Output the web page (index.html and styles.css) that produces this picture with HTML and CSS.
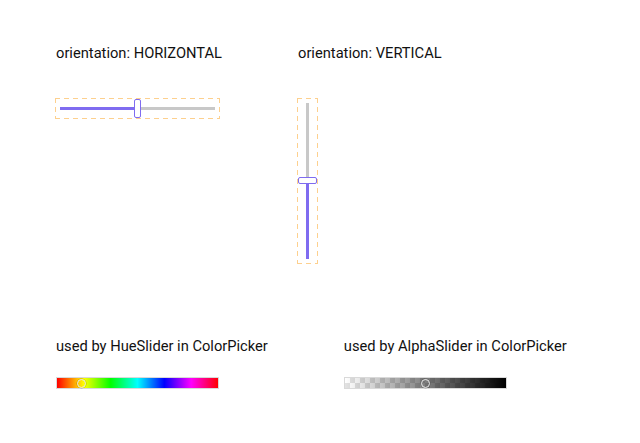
FILE: index.html
```html
<!DOCTYPE html>
<html>
<head>
<meta charset="utf-8">
<link rel="stylesheet" href="styles.css">
</head>
<body>
  <div class="demo">
    <div class="row row-top">
      <div class="item">
        <div class="label">orientation: HORIZONTAL</div>
        <div class="frame frame-h">
          <div class="slider slider-h">
            <div class="track track-h"><div class="fill fill-h"></div></div>
            <div class="thumb thumb-h"></div>
          </div>
        </div>
      </div>
      <div class="item">
        <div class="label">orientation: VERTICAL</div>
        <div class="frame frame-v">
          <div class="slider slider-v">
            <div class="track track-v"><div class="fill fill-v"></div></div>
            <div class="thumb thumb-v"></div>
          </div>
        </div>
      </div>
    </div>

    <div class="row row-bottom">
      <div class="item">
        <div class="label">used by HueSlider in ColorPicker</div>
        <div class="bar hue">
          <div class="knob knob-hue"></div>
        </div>
      </div>
      <div class="item">
        <div class="label">used by AlphaSlider in ColorPicker</div>
        <div class="bar alpha">
          <div class="alpha-grad"></div>
          <div class="knob knob-alpha"></div>
        </div>
      </div>
    </div>
  </div>
</body>
</html>
```

FILE: styles.css
```css
html, body {
  margin: 0;
  padding: 0;
  background: #ffffff;
}

body {
  font-family: Roboto, "Liberation Sans", sans-serif;
  font-size: 14.7px;
  color: #111111;
}

.demo {
  padding: 44px 0 0 56px;
}

.row {
  display: flex;
  column-gap: 76px;
  align-items: flex-start;
}

.row-bottom {
  margin-top: 73px;
}

.label {
  line-height: 18px;
  white-space: nowrap;
}

/* dashed outline around each slider, drawn with long dashes */
.frame {
  --dash: #fdd08e;
  margin-top: 36px;
  box-sizing: border-box;
  background:
    repeating-linear-gradient(to right, var(--dash) 0 5px, transparent 5px 9px) left top / 100% 1px no-repeat,
    repeating-linear-gradient(to right, var(--dash) 0 5px, transparent 5px 9px) left bottom / 100% 1px no-repeat,
    repeating-linear-gradient(to bottom, var(--dash) 0 5px, transparent 5px 9px) left top / 1px 100% no-repeat,
    repeating-linear-gradient(to bottom, var(--dash) 0 5px, transparent 5px 9px) right top / 1px 100% no-repeat;
}

.frame-h {
  width: 165px;
  height: 21px;
  margin-left: -1px;
  padding: 1px 5px;
}

.frame-v {
  width: 21px;
  height: 166px;
  margin-left: -1px;
  padding: 5px 1px;
}

.slider {
  position: relative;
  width: 100%;
  height: 100%;
}

.track {
  position: absolute;
  background: #c8c8c8;
}

.track-h {
  left: 0;
  right: 0;
  top: 8px;
  height: 3px;
}

.track-v {
  top: 0;
  bottom: 0;
  left: 8px;
  width: 3px;
}

.fill {
  position: absolute;
  background: #7f6cf0;
}

.fill-h {
  left: 0;
  top: 0;
  bottom: 0;
  width: 50%;
}

.fill-v {
  left: 0;
  right: 0;
  bottom: 0;
  height: 50%;
}

.thumb {
  position: absolute;
  background: #ffffff;
  border: 1.5px solid #7f6cf0;
  border-radius: 2px;
  box-sizing: border-box;
}

.thumb-h {
  left: calc(50% - 4px);
  top: 0;
  width: 7px;
  height: 19px;
}

.thumb-v {
  top: calc(50% - 4px);
  left: 0;
  width: 19px;
  height: 7px;
}

/* colour picker bars */
.bar {
  position: relative;
  margin-top: 22px;
  width: 163px;
  height: 12px;
  box-sizing: border-box;
  border: 1px solid #d9d9d9;
}

.hue {
  background: linear-gradient(to right,
    #ff0000 0%, #ffff00 16.66%, #00ff00 33.33%, #00ffff 50%,
    #0000ff 66.66%, #ff00ff 83.33%, #ff0000 100%);
}

.alpha {
  background-color: #ffffff;
  background-image:
    linear-gradient(45deg, #e2e2e2 25%, transparent 25%, transparent 75%, #e2e2e2 75%),
    linear-gradient(45deg, #e2e2e2 25%, transparent 25%, transparent 75%, #e2e2e2 75%);
  background-size: 10px 10px;
  background-position: 0 0, 5px 5px;
}

.alpha-grad {
  position: absolute;
  inset: 0;
  background: linear-gradient(to right, rgba(0, 0, 0, 0), #000000);
}

.knob {
  position: absolute;
  top: 50%;
  width: 9px;
  height: 9px;
  margin: -4.5px 0 0 -4.5px;
  box-sizing: border-box;
  border-radius: 50%;
  border: 1.5px solid #e8e8e8;
  box-shadow: 0 0 0 0.5px rgba(0, 0, 0, 0.25);
}

.knob-hue {
  left: 15%;
}

.knob-alpha {
  left: 50%;
}
```
